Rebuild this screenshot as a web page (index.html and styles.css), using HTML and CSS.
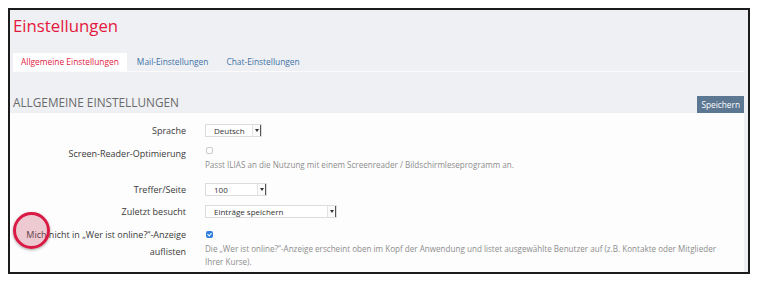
FILE: index.html
```html
<!DOCTYPE html>
<html lang="de">
<head>
  <meta charset="UTF-8">
  <title>Einstellungen</title>
  <link rel="stylesheet" href="styles.css">
</head>
<body>

  <div class="frame">
    <div class="top">
      <h1 class="title">Einstellungen</h1>
      <ul class="tabs">
        <li class="tab active">Allgemeine Einstellungen</li>
        <li class="tab">Mail-Einstellungen</li>
        <li class="tab">Chat-Einstellungen</li>
      </ul>
      <div class="section-head">
        <h2>Allgemeine Einstellungen</h2>
        <button class="save">Speichern</button>
      </div>
    </div>

    <div class="form">
      <div class="row row-lang">
        <div class="label">Sprache</div>
        <div class="field">
          <div class="select w-lang"><span>Deutsch</span><i class="arrow"></i></div>
        </div>
      </div>

      <div class="row row-reader">
        <div class="label">Screen-Reader-Optimierung</div>
        <div class="field">
          <div class="check-wrap"><span class="check"></span></div>
          <p class="info">Passt ILIAS an die Nutzung mit einem Screenreader / Bildschirmleseprogramm an.</p>
        </div>
      </div>

      <div class="row row-hits">
        <div class="label">Treffer/Seite</div>
        <div class="field">
          <div class="select w-hits"><span>100</span><i class="arrow"></i></div>
        </div>
      </div>

      <div class="row row-last">
        <div class="label">Zuletzt besucht</div>
        <div class="field">
          <div class="select w-last"><span>Einträge speichern</span><i class="arrow"></i></div>
        </div>
      </div>

      <div class="row row-online">
        <div class="label tall">Mich nicht in „Wer ist online?“-Anzeige auflisten</div>
        <div class="field">
          <div class="check-wrap big"><span class="check checked"></span></div>
          <p class="info">Die „Wer ist online?“-Anzeige erscheint oben im Kopf der Anwendung und listet ausgewählte Benutzer auf (z.B. Kontakte oder Mitglieder Ihrer Kurse).</p>
        </div>
      </div>
    </div>

    <span class="marker"></span>
  </div>

</body>
</html>
```

FILE: styles.css
```css
body {
  margin: 0;
  padding: 0;
  background-color: #fff;
  font-family: 'Open Sans', 'Liberation Sans', sans-serif;
  color: #444;
}
.frame {
  position: relative;
  box-sizing: border-box;
  width: 742px;
  height: 266px;
  margin: 8px 0 0 8px;
  border: 2px solid #1c1c1c;
  background-color: #eef0f4;
  padding-right: 4px;
  display: flex;
  flex-direction: column;
}
.top {
  padding-left: 3px;
}
.title {
  margin: 0;
  padding-top: 4px;
  font-size: 16.8px;
  line-height: 24px;
  font-weight: 400;
  color: #e5183d;
}
.tabs {
  list-style: none;
  margin: 15px 0 0 0;
  padding: 0;
  display: flex;
  border-bottom: 1px solid #fbfbfc;
}
.tab {
  font-size: 8.4px;
  line-height: 18px;
  padding: 0 8px;
  margin-right: 2px;
  color: #3f72a6;
}
.tab.active {
  background-color: #fff;
  color: #e2213f;
}
.section-head {
  display: flex;
  justify-content: space-between;
  align-items: flex-end;
  height: 41px;
  margin-left: -3px;
  padding-left: 3px;
}
.section-head h2 {
  margin: 0 0 2px 0;
  font-size: 11.8px;
  line-height: 17px;
  font-weight: 400;
  text-transform: uppercase;
  color: #6a6a6a;
}
.save {
  height: 17px;
  padding: 0 4px;
  border: none;
  background-color: #5b7792;
  color: #fff;
  font-family: inherit;
  font-size: 8.3px;
}
.form {
  flex: 1;
  background-color: #fdfdfd;
}
.row {
  display: flex;
}
.label {
  width: 176px;
  flex-shrink: 0;
  text-align: right;
  font-size: 9px;
  line-height: 13px;
  color: #3a3a3a;
}
.label.tall {
  line-height: 17px;
}
.field {
  margin-left: 19px;
  flex: 1;
}
.row-lang { padding-top: 11px; }
.row-reader { margin-top: 10px; }
.row-hits { margin-top: 12px; }
.row-last { margin-top: 9px; }
.row-online { margin-top: 8px; }

.select {
  box-sizing: border-box;
  height: 13px;
  display: flex;
  align-items: center;
  justify-content: space-between;
  border: 1px solid #dcdcdc;
  background-color: #fff;
  font-size: 8px;
  color: #333;
  padding-left: 8px;
}
.w-lang { width: 57px; }
.w-hits { width: 62px; }
.w-last { width: 132px; }
.arrow {
  position: relative;
  width: 7px;
  height: 11px;
  border-left: 1px solid #e4e4e4;
  border-right: 1px solid #555;
  background-color: #fafafa;
}
.arrow::after {
  content: "";
  position: absolute;
  left: 2px;
  top: 4px;
  border-left: 2px solid transparent;
  border-right: 2px solid transparent;
  border-top: 3px solid #333;
}
.check-wrap {
  height: 11px;
  padding-left: 1px;
}
.check-wrap.big {
  height: 16px;
  padding-top: 5px;
  box-sizing: border-box;
}
.check {
  display: block;
  box-sizing: border-box;
  width: 7px;
  height: 7px;
  border: 1px solid #c9c9c9;
  border-radius: 2px;
  background-color: #fff;
}
.check.checked {
  position: relative;
  border: none;
  background-color: #2f7fe0;
}
.check.checked::after {
  content: "";
  position: absolute;
  left: 2px;
  top: 1px;
  width: 2px;
  height: 3px;
  border: solid #fff;
  border-width: 0 1px 1px 0;
  transform: rotate(40deg);
}
.info {
  margin: 0;
  font-size: 8.1px;
  line-height: 13px;
  color: #8d8d8d;
  max-width: 525px;
}
.marker {
  position: absolute;
  left: 3px;
  top: 202px;
  box-sizing: border-box;
  width: 37px;
  height: 37px;
  border: 3.5px solid #d81a44;
  border-radius: 50%;
  background-color: rgba(196, 70, 100, 0.28);
  box-shadow: 0 1px 3px rgba(0, 0, 0, 0.35);
}
```
